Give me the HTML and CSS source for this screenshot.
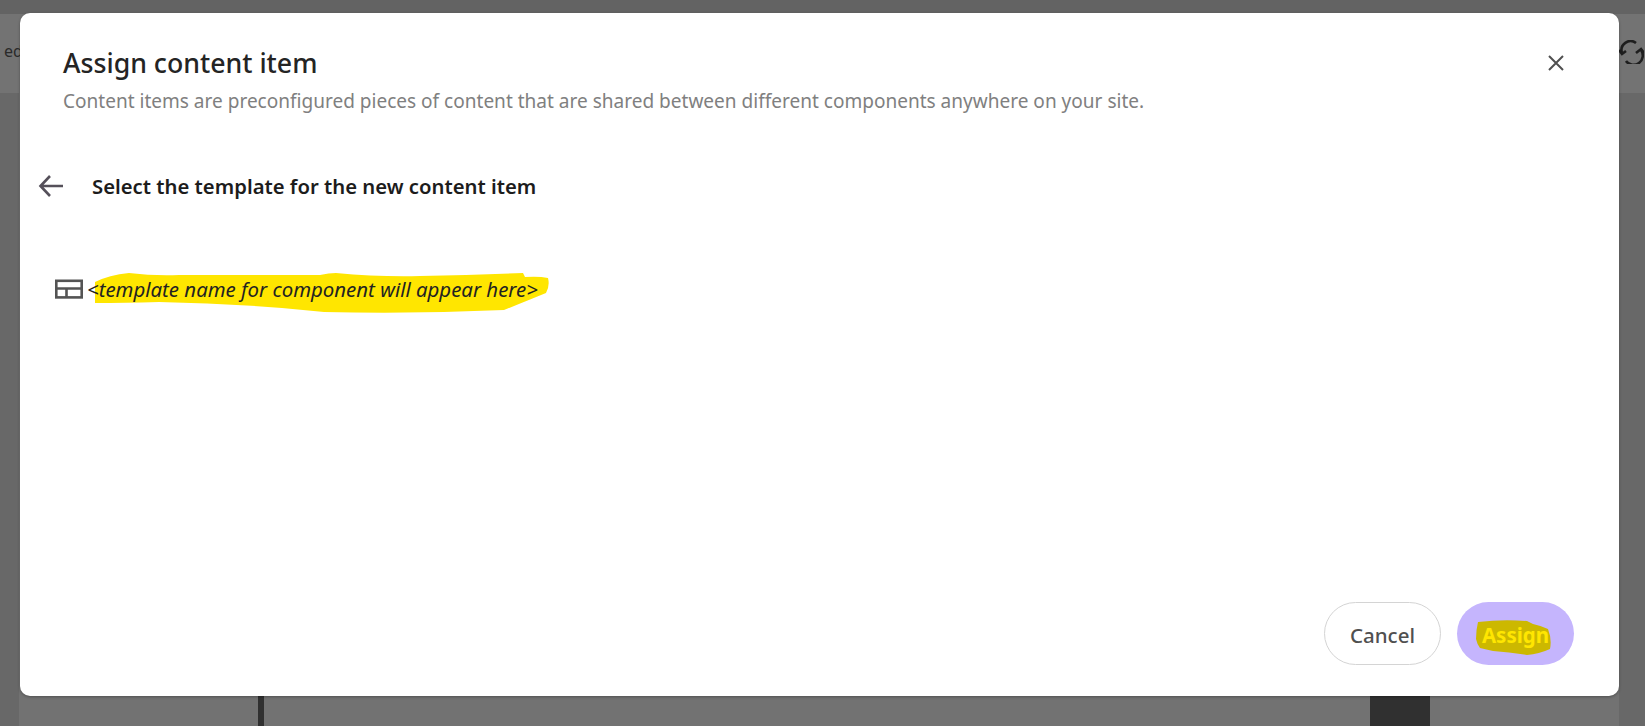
FILE: index.html
```html
<!DOCTYPE html>
<html lang="en">
<head>
    <meta charset="UTF-8">
    <meta name="viewport" content="width=device-width, initial-scale=1.0">
    <title>Assign content item</title>
    <link rel="stylesheet" href="styles.css">
</head>
<body>
    <!-- Page behind the dialog -->
    <div class="page">
        <div class="top-strip"></div>
        <div class="toolbar">
            <span class="toolbar-text">ed</span>
            <svg class="refresh-icon" width="26" height="24" viewBox="0 0 26 24" fill="none" stroke="#1e1e1e" stroke-width="2.6">
                <path d="M4 13a9 9 0 0 1 14-10"/>
                <path d="M23 10a9 9 0 0 1-15 11"/>
                <path d="M1 10l3 4 4-3"/>
                <path d="M18 13l5-4 3 4"/>
            </svg>
        </div>
        <div class="canvas">
            <div class="canvas-line"></div>
            <div class="canvas-block"></div>
        </div>
    </div>

    <!-- Dialog -->
    <div class="modal">
        <div class="modal-header">
            <div>
                <h1 class="modal-title">Assign content item</h1>
                <p class="modal-subtitle">Content items are preconfigured pieces of content that are shared between different components anywhere on your site.</p>
            </div>
            <button class="close-button" aria-label="Close">
                <svg width="18" height="18" viewBox="0 0 18 18" fill="none" stroke="#505050" stroke-width="2">
                    <path d="M2 2l14 14M16 2L2 16"/>
                </svg>
            </button>
        </div>

        <div class="step-heading">
            <svg class="back-icon" width="26" height="24" viewBox="0 0 26 24" fill="none" stroke="#55505a" stroke-width="2.6">
                <path d="M25 12H3M12 2L2.500 12l9.500 10"/>
            </svg>
            <h2 class="step-title">Select the template for the new content item</h2>
        </div>

        <div class="template-row">
            <svg class="template-icon" width="28" height="20" viewBox="0 0 28 20" fill="none" stroke="#545454" stroke-width="2.600">
                <rect x="1.300" y="1.800" width="25.400" height="16.600"/>
                <path d="M1 9.500h26M11.500 9.500v9"/>
            </svg>
            <div class="template-name">
                <svg class="scribble" width="464" height="46" viewBox="0 0 464 46">
                    <path fill="#ffe600" d="M6 12Q20 5 40 3Q65 6 90 5L231 5Q240 3 247 3Q290 7 331 6Q385 5 434 3L436 7Q450 6 459 8Q461 16 457 23Q440 30 415 40Q325 44 235 42L193 38Q130 33 70 32Q35 33 6 33Z"/>
                </svg>
                <span class="template-label">&lt;template name for component will appear here&gt;</span>
            </div>
        </div>

        <div class="modal-footer">
            <button class="btn btn-cancel">Cancel</button>
            <button class="btn btn-assign">
                <svg class="scribble" width="78" height="40" viewBox="0 0 78 40">
                    <path fill="#ccb800" d="M4 5Q28 2 53 4L59 7Q68 9 74 12Q78 22 76 32Q65 37 53 38Q35 35 19 34L6 31Q3 27 2 22Q2 13 4 5Z"/>
                </svg>
                <span class="assign-label">Assign</span>
            </button>
        </div>
    </div>
</body>
</html>
```

FILE: styles.css
```css
/* General styles */
body {
    margin: 0;
    padding: 0;
    height: 726px;
    overflow: hidden;
    font-family: "Noto Sans", Arial, sans-serif;
    background-color: #686868;
}

/* Page behind the dialog */
.page {
    display: flex;
    flex-direction: column;
    height: 726px;
}

.top-strip {
    height: 14px;
    background-color: #636363;
}

.toolbar {
    height: 79px;
    display: flex;
    align-items: center;
    justify-content: space-between;
    background-color: #737373;
}

.toolbar-text {
    margin-left: 4px;
    margin-bottom: 6px;
    font-size: 16px;
    color: #2a2a2a;
}

.refresh-icon {
    margin-right: 1px;
    margin-bottom: 3px;
}

.canvas {
    flex: 1;
    margin: 0 26px 0 19px;
    display: flex;
    justify-content: flex-start;
    background-color: #727272;
}

.canvas-line {
    width: 6px;
    margin-left: 239px;
    background-color: #303030;
}

.canvas-block {
    width: 60px;
    margin-left: 1106px;
    background-color: #303030;
}

/* Dialog */
.modal {
    position: absolute;
    top: 13px;
    left: 20px;
    width: 1599px;
    height: 683px;
    box-sizing: border-box;
    padding: 33px 45px 31px 43px;
    display: flex;
    flex-direction: column;
    background-color: #ffffff;
    border-radius: 10px;
    box-shadow: 0 1px 3px rgba(0, 0, 0, 0.3);
}

.modal-header {
    display: flex;
    justify-content: space-between;
    align-items: flex-start;
}

.modal-title {
    margin: 0;
    font-size: 26.700px;
    line-height: 34px;
    font-weight: 500;
    color: #242424;
}

.modal-subtitle {
    margin: 9px 0 0 0;
    font-size: 19.040px;
    line-height: 24px;
    color: #808080;
}

.close-button {
    margin: 8px 9px 0 0;
    padding: 0;
    display: flex;
    border: none;
    background: none;
}

/* Step heading */
.step-heading {
    margin: 58px 0 0 -25px;
    display: flex;
    align-items: center;
    gap: 28px;
}

.back-icon {
    flex: none;
}

.step-title {
    margin: 0;
    font-size: 20.300px;
    line-height: 30px;
    font-weight: 600;
    color: #1c1c1c;
}

/* Template row */
.template-row {
    margin: 73px 0 0 -8px;
    display: flex;
    align-items: center;
    gap: 4px;
}

.template-name {
    position: relative;
    display: flex;
}

.template-label {
    position: relative;
    font-size: 20.400px;
    line-height: 30px;
    font-style: italic;
    color: #222222;
}

.template-name .scribble {
    position: absolute;
    top: -4px;
    left: 2px;
}

/* Footer buttons */
.modal-footer {
    margin-top: auto;
    display: flex;
    justify-content: flex-end;
    gap: 16px;
}

.btn {
    position: relative;
    width: 117px;
    height: 63px;
    padding: 2px 0 0 0;
    font-family: inherit;
    font-size: 20.500px;
    border-radius: 32px;
    display: flex;
    align-items: center;
    justify-content: center;
}

.btn-cancel {
    color: #505050;
    font-weight: 500;
    background-color: #ffffff;
    border: 1px solid #d4d4d4;
}

.btn-assign {
    color: #ffe600;
    font-weight: 700;
    background-color: #c5b5fd;
    border: none;
}

.btn-assign .scribble {
    position: absolute;
    top: 15px;
    left: 17px;
}

.assign-label {
    position: relative;
}
```
